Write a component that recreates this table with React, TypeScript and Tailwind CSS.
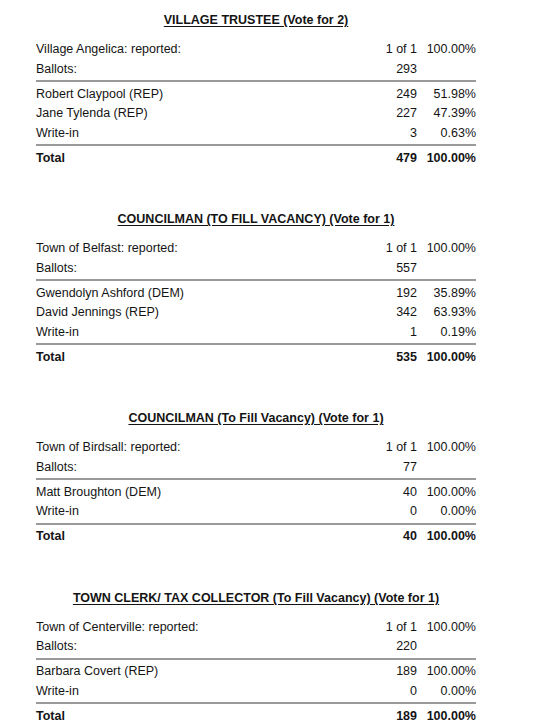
import React from "react";

type Row = { label: string; num: string; pct: string };
type Section = {
  title: string;
  gap: string;
  reported: Row;
  ballots: string;
  candidates: Row[];
  total: Row;
};

const sections: Section[] = [
  {
    title: "VILLAGE TRUSTEE (Vote for 2)",
    gap: "mt-[10px]",
    reported: { label: "Village Angelica: reported:", num: "1 of 1", pct: "100.00%" },
    ballots: "293",
    candidates: [
      { label: "Robert Claypool (REP)", num: "249", pct: "51.98%" },
      { label: "Jane Tylenda (REP)", num: "227", pct: "47.39%" },
      { label: "Write-in", num: "3", pct: "0.63%" },
    ],
    total: { label: "Total", num: "479", pct: "100.00%" },
  },
  {
    title: "COUNCILMAN (TO FILL VACANCY) (Vote for 1)",
    gap: "mt-[10px]",
    reported: { label: "Town of Belfast: reported:", num: "1 of 1", pct: "100.00%" },
    ballots: "557",
    candidates: [
      { label: "Gwendolyn Ashford (DEM)", num: "192", pct: "35.89%" },
      { label: "David Jennings (REP)", num: "342", pct: "63.93%" },
      { label: "Write-in", num: "1", pct: "0.19%" },
    ],
    total: { label: "Total", num: "535", pct: "100.00%" },
  },
  {
    title: "COUNCILMAN (To Fill Vacancy) (Vote for 1)",
    gap: "mt-[10px]",
    reported: { label: "Town of Birdsall: reported:", num: "1 of 1", pct: "100.00%" },
    ballots: "77",
    candidates: [
      { label: "Matt Broughton (DEM)", num: "40", pct: "100.00%" },
      { label: "Write-in", num: "0", pct: "0.00%" },
    ],
    total: { label: "Total", num: "40", pct: "100.00%" },
  },
  {
    title: "TOWN CLERK/ TAX COLLECTOR (To Fill Vacancy) (Vote for 1)",
    gap: "mt-[10px]",
    reported: { label: "Town of Centerville: reported:", num: "1 of 1", pct: "100.00%" },
    ballots: "220",
    candidates: [
      { label: "Barbara Covert (REP)", num: "189", pct: "100.00%" },
      { label: "Write-in", num: "0", pct: "0.00%" },
    ],
    total: { label: "Total", num: "189", pct: "100.00%" },
  },
];

function Line() {
  return <div className="mt-[1px] mb-[2.5px] h-[2px] bg-[#9a9a9a]" />;
}

function DataRow({ row, bold }: { row: Row; bold?: boolean }) {
  return (
    <div className={`flex h-[19.5px] items-center leading-[19.5px] ${bold ? "font-bold" : ""}`}>
      <div className="flex-1 whitespace-nowrap">{row.label}</div>
      <div className="w-[80px] text-right whitespace-nowrap">{row.num}</div>
      <div className="w-[59px] text-right whitespace-nowrap">{row.pct}</div>
    </div>
  );
}

export default function App() {
  return (
    <div
      className="min-h-[723px] w-[535px] bg-white pt-[10px] pl-[36px] text-[12.5px] text-[#141414]"
      style={{ fontFamily: '"Liberation Sans", Arial, sans-serif' }}
    >
      <div className="flex w-[440px] flex-col gap-[41px]">
        {sections.map((s) => (
          <div key={s.title} className="flex flex-col">
            <div className="h-[20px] text-center font-bold leading-[20px] underline underline-offset-[2px]">
              {s.title}
            </div>
            <div className={s.gap}>
              <DataRow row={s.reported} />
              <DataRow row={{ label: "Ballots:", num: s.ballots, pct: "" }} />
              <Line />
              {s.candidates.map((c) => (
                <DataRow key={c.label} row={c} />
              ))}
              <Line />
              <DataRow row={s.total} bold />
            </div>
          </div>
        ))}
      </div>
    </div>
  );
}
